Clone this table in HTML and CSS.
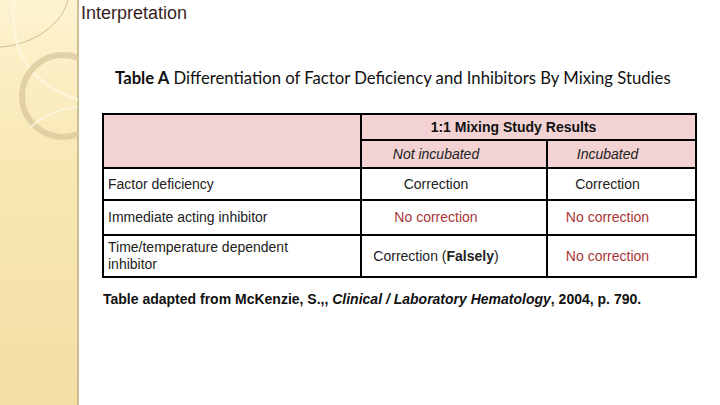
FILE: index.html
```html
<!DOCTYPE html>
<html>
<head>
<meta charset="utf-8">
<link rel="stylesheet" href="styles.css">
</head>
<body>
<div class="slide">
  <aside class="sidebar">
    <svg class="deco" width="78" height="405" viewBox="0 0 78 405">
      <path d="M0 47 C 25 46, 60 30, 68 0" fill="none" stroke="#c9b07a" stroke-width="0.8"/>
      <path d="M14 0 C 10 40, 20 80, 78 100" fill="none" stroke="#fff8e0" stroke-width="3" opacity="0.7"/>
      <circle cx="63" cy="96" r="41" fill="none" stroke="#dccba0" stroke-width="6" opacity="0.85"/>
      <path d="M30 128 C 45 113, 65 108, 78 107" fill="none" stroke="#fffaf0" stroke-width="2" opacity="0.6"/>
    </svg>
  </aside>
  <main class="content">
    <h1 class="heading">Interpretation</h1>
    <p class="caption"><b>Table A</b> Differentiation of Factor Deficiency and Inhibitors By Mixing Studies</p>
    <table class="mix">
      <tr class="h1">
        <td class="blank" rowspan="2"></td>
        <td class="group" colspan="2">1:1 Mixing Study Results</td>
      </tr>
      <tr class="h2">
        <td class="c2 it">Not incubated</td>
        <td class="c3 it">Incubated</td>
      </tr>
      <tr class="r1">
        <td class="lab">Factor deficiency</td>
        <td class="c2">Correction</td>
        <td class="c3">Correction</td>
      </tr>
      <tr class="r2">
        <td class="lab">Immediate acting inhibitor</td>
        <td class="c2 red">No correction</td>
        <td class="c3 red">No correction</td>
      </tr>
      <tr class="r3">
        <td class="lab">Time/temperature dependent<br>inhibitor</td>
        <td class="c2">Correction (<b>Falsely</b>)</td>
        <td class="c3 red">No correction</td>
      </tr>
    </table>
    <p class="source">Table adapted from McKenzie, S.,, <i>Clinical / Laboratory Hematology</i>, 2004, p. 790.</p>
  </main>
</div>
</body>
</html>
```
FILE: styles.css
```css
html, body {
  margin: 0;
  padding: 0;
  background: #ffffff;
}
.slide {
  width: 720px;
  height: 405px;
  display: flex;
  overflow: hidden;
  font-family: "Liberation Sans", Arial, sans-serif;
}
.sidebar {
  width: 77px;
  flex: none;
  background: linear-gradient(180deg, #fdf3d0 0%, #f9e8b4 40%, #f3dea4 100%);
  border-right: 2px solid #cdbd93;
}
.deco {
  display: block;
}
.content {
  flex: 1;
  padding-left: 2px;
}
.heading {
  margin: 0;
  padding-top: 2px;
  font-size: 18px;
  font-weight: normal;
  color: #3a1e1e;
  line-height: 22px;
}
.caption {
  margin: 44px 0 0 34px;
  font-family: Lato, "Open Sans", sans-serif;
  font-size: 16.7px;
  line-height: 20px;
  color: #111;
  white-space: nowrap;
}
.mix {
  margin: 25px 0 0 21px;
  border-collapse: collapse;
  border: 2px solid #000;
  font-size: 14px;
  color: #222;
}
.mix td {
  border: 2px solid #000;
  padding: 0;
  line-height: 17px;
}
.mix .blank {
  width: 256px;
  background: #f2d2d2;
}
.mix .group {
  background: #f2d2d2;
  font-weight: bold;
  text-align: center;
  padding-right: 30px;
  color: #111;
}
.h1 { height: 26px; }
.h2 { height: 28px; }
.r1 { height: 32px; }
.r2 { height: 35px; }
.r3 { height: 42px; }
.mix .c2 {
  width: 148px;
  text-align: center;
  padding-right: 36px;
}
.mix .c3 {
  width: 119px;
  text-align: center;
  padding-right: 28px;
}
.h2 td { background: #f2d2d2; }
.it { font-style: italic; }
.red { color: #a83636; }
.mix .lab {
  padding-left: 4px;
}
.source {
  margin: 13px 0 0 22px;
  font-size: 14px;
  font-weight: bold;
  color: #111;
  white-space: nowrap;
}
```
